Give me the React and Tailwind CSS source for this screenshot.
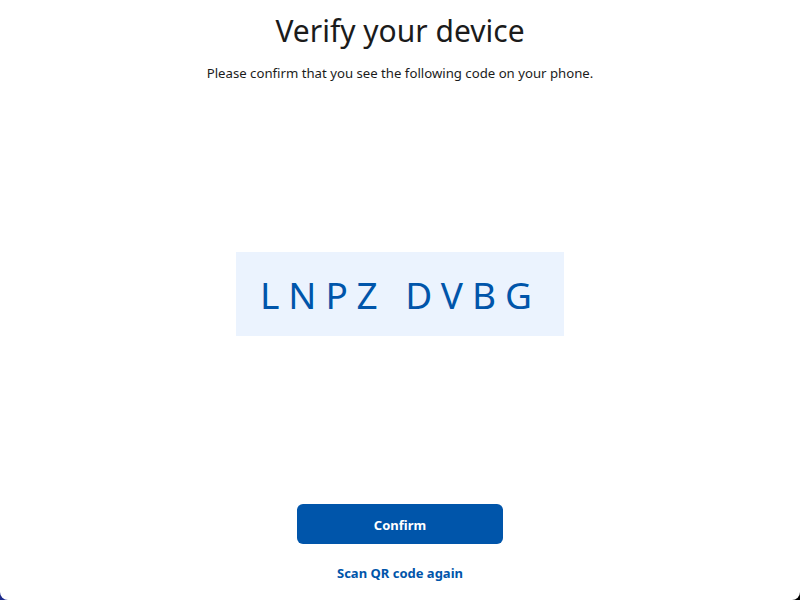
export default function App() {
  return (
    <div className="w-[800px] h-[600px] bg-gradient-to-r from-[#1c2a8c] via-[#101040] to-[#000000]">
      <div
        className="w-full h-full bg-white rounded-b-[8px] flex flex-col items-center"
        style={{ fontFamily: '"Noto Sans", "Open Sans", sans-serif' }}
      >
        <h1 className="mt-[11px] text-[30px] leading-[40px] text-[#1b1b1b] font-normal">
          Verify your device
        </h1>
        <p className="mt-[13px] text-[13.2px] leading-[18px] text-[#1b1b1b]">
          Please confirm that you see the following code on your phone.
        </p>
        <div className="mt-[170px] w-[328px] h-[84px] bg-[#ebf3fe] flex items-center justify-center">
          <span className="text-[37px] tracking-[9px] pl-[1px] text-[#0055aa] leading-none">
            LNPZ DVBG
          </span>
        </div>
        <button className="mt-[168px] w-[206px] h-[40px] pt-[3px] rounded-[6px] bg-[#0055aa] text-white text-[13px] font-bold">
          Confirm
        </button>
        <a className="mt-[20px] text-[13px] font-bold text-[#0055aa] leading-[18px]">
          Scan QR code again
        </a>
      </div>
    </div>
  );
}
